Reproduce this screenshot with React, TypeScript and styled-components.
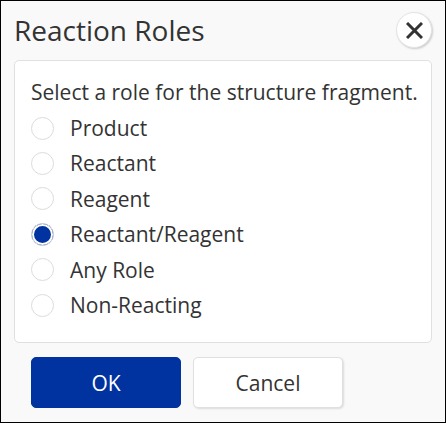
import React, { useState } from "react";
import styled, { createGlobalStyle } from "styled-components";

const Global = createGlobalStyle`
  html, body { margin: 0; padding: 0; background: #fff; }
  * { box-sizing: border-box; }
  body { font-family: "Open Sans", "Noto Sans", sans-serif; }
`;

const Dialog = styled.div`
  width: 446px;
  height: 423px;
  border: 1px solid #000;
  background: #f9f9f9;
  display: flex;
  flex-direction: column;
`;

const Header = styled.div`
  height: 59px;
  display: flex;
  align-items: center;
  justify-content: space-between;
  padding: 0 13px 0 13px;
`;

const Title = styled.h1`
  margin: 0;
  font-size: 28px;
  font-weight: 400;
  color: #333;
  line-height: 36px;
  margin-top: -2px;
`;

const CloseButton = styled.button`
  width: 36px;
  height: 36px;
  border-radius: 50%;
  border: 1px solid #e4e4e4;
  background: #fff;
  box-shadow: 1px 1px 2px rgba(0, 0, 0, 0.18);
  display: flex;
  align-items: center;
  justify-content: center;
  padding: 0;
  margin-top: -1px;
  cursor: pointer;
`;

const Panel = styled.div`
  margin: 0 13px;
  height: 283px;
  background: #fff;
  border: 1px solid #e0e0e0;
  border-radius: 5px;
  padding: 14px 10px 0 16px;
  color: #333;
`;

const Prompt = styled.div`
  font-size: 21px;
  height: 35.4px;
  line-height: 35.4px;
  white-space: nowrap;
`;

const Option = styled.label`
  display: flex;
  align-items: center;
  height: 35.4px;
  font-size: 21px;
  cursor: pointer;
`;

const Circle = styled.span<{ $checked: boolean }>`
  width: 23px;
  height: 23px;
  border-radius: 50%;
  border: 1px solid #dcdcdc;
  background: ${(p) => (p.$checked ? "#0033a0" : "#fff")};
  box-shadow: ${(p) => (p.$checked ? "inset 0 0 0 2px #fff" : "none")};
  margin-right: 16px;
  flex: none;
`;

const HiddenInput = styled.input`
  display: none;
`;

const Footer = styled.div`
  display: flex;
  gap: 12px;
  padding: 14px 0 0 30px;
`;

const Button = styled.button<{ $primary?: boolean }>`
  width: 150px;
  height: 51px;
  border-radius: 5px;
  font-family: "Open Sans", "Noto Sans", sans-serif;
  font-size: 21px;
  border: 1px solid ${(p) => (p.$primary ? "#0033a0" : "#e0e0e0")};
  background: ${(p) => (p.$primary ? "#0033a0" : "#fff")};
  color: ${(p) => (p.$primary ? "#fff" : "#333")};
  box-shadow: ${(p) => (p.$primary ? "none" : "1px 1px 2px rgba(0,0,0,0.12)")};
  cursor: pointer;
`;

const roles = ["Product", "Reactant", "Reagent", "Reactant/Reagent", "Any Role", "Non-Reacting"];

export default function App() {
  const [sel, setSel] = useState("Reactant/Reagent");
  return (
    <>
      <Global />
      <Dialog>
        <Header>
          <Title>Reaction Roles</Title>
          <CloseButton aria-label="Close">
            <svg width="17" height="17" viewBox="0 0 17 17">
              <path d="M1 1 L16 16 M16 1 L1 16" stroke="#333" strokeWidth="3" strokeLinecap="butt" />
            </svg>
          </CloseButton>
        </Header>
        <Panel>
          <Prompt>Select a role for the structure fragment.</Prompt>
          {roles.map((r) => (
            <Option key={r}>
              <HiddenInput type="radio" name="role" checked={sel === r} onChange={() => setSel(r)} />
              <Circle $checked={sel === r} />
              {r}
            </Option>
          ))}
        </Panel>
        <Footer>
          <Button $primary>OK</Button>
          <Button>Cancel</Button>
        </Footer>
      </Dialog>
    </>
  );
}
